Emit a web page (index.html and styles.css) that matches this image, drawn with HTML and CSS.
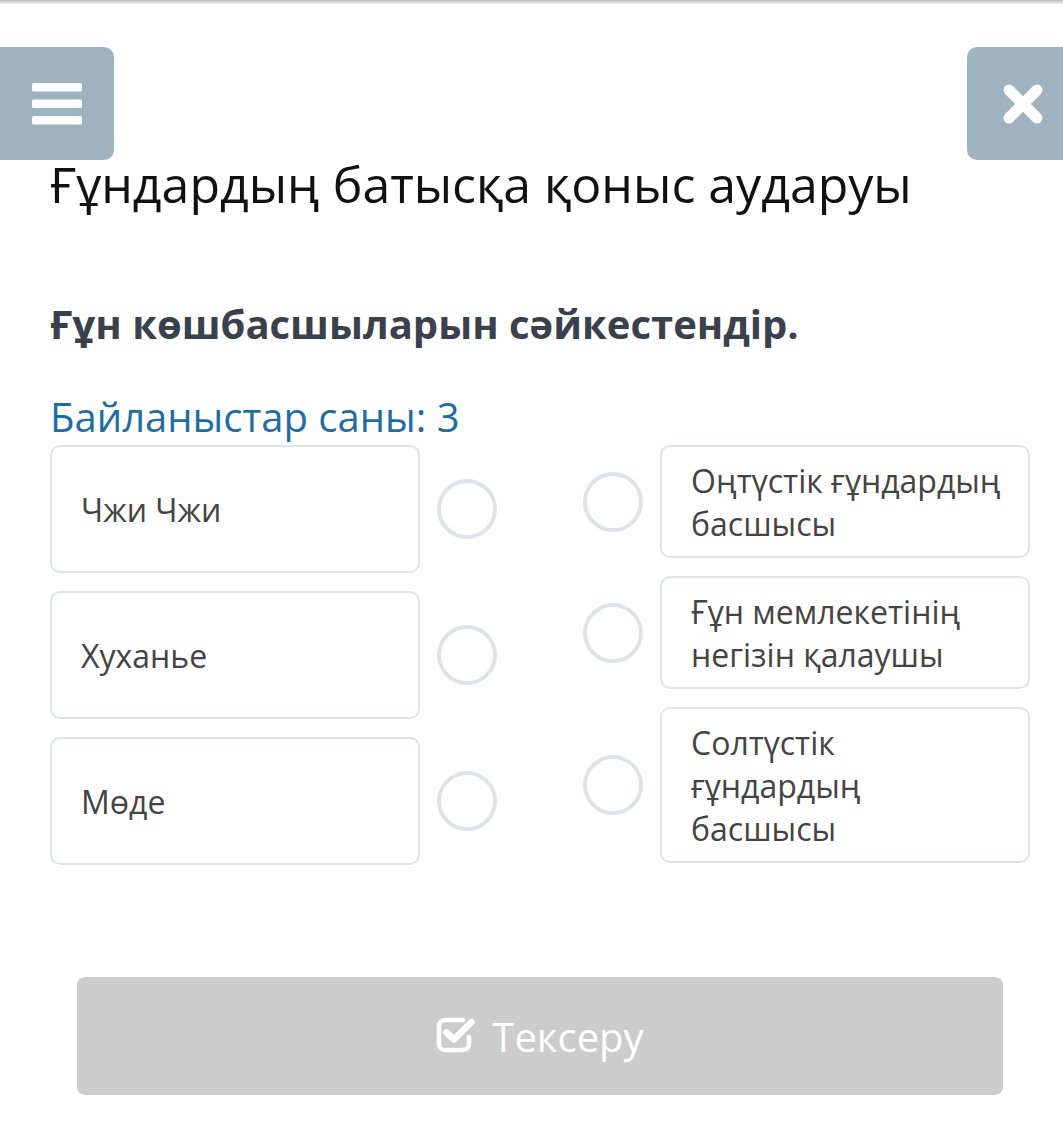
FILE: index.html
```html
<!DOCTYPE html>
<html lang="kk">

<head>
    <meta charset="UTF-8">
    <meta name="viewport" content="width=device-width, initial-scale=1.0">
    <title>Ғұндардың батысқа қоныс аударуы</title>
    <link rel="stylesheet" href="styles.css">
</head>

<body>

    <div class="top-shadow"></div>

    <div class="top-bar">
        <button class="menu-btn" aria-label="Menu">
            <svg width="50" height="42" viewBox="0 0 50 42">
                <rect x="0" y="0" width="50" height="8.5" rx="1.5" fill="#fff" />
                <rect x="0" y="16.5" width="50" height="8.5" rx="1.5" fill="#fff" />
                <rect x="0" y="33" width="50" height="8.5" rx="1.5" fill="#fff" />
            </svg>
        </button>
        <button class="close-btn" aria-label="Close">
            <svg width="42" height="42" viewBox="0 0 42 42">
                <path d="M7 7 L35 35 M35 7 L7 35" stroke="#fff" stroke-width="11" stroke-linecap="round" />
            </svg>
        </button>
    </div>

    <div class="content">
        <h1 class="lesson-title">Ғұндардың батысқа қоныс аударуы</h1>

        <h2 class="task-title">Ғұн көшбасшыларын сәйкестендір.</h2>

        <div class="links-count">Байланыстар саны: 3</div>

        <div class="match-area">
            <div class="match-col">
                <div class="match-row">
                    <div class="match-card tall">Чжи Чжи</div>
                    <span class="dot"></span>
                </div>
                <div class="match-row">
                    <div class="match-card tall">Хуханье</div>
                    <span class="dot"></span>
                </div>
                <div class="match-row">
                    <div class="match-card tall">Мөде</div>
                    <span class="dot"></span>
                </div>
            </div>

            <div class="match-col">
                <div class="match-row">
                    <span class="dot"></span>
                    <div class="match-card">Оңтүстік ғұндардың басшысы</div>
                </div>
                <div class="match-row">
                    <span class="dot"></span>
                    <div class="match-card">Ғұн мемлекетінің негізін қалаушы</div>
                </div>
                <div class="match-row">
                    <span class="dot"></span>
                    <div class="match-card">Солтүстік ғұндардың басшысы</div>
                </div>
            </div>
        </div>

        <button class="check-btn">
            <svg width="40" height="38" viewBox="0 0 40 38">
                <path d="M27 5 H9 a6 6 0 0 0 -6 6 v18 a6 6 0 0 0 6 6 h18 a6 6 0 0 0 6 -6 v-7" fill="none" stroke="#fff" stroke-width="4.5" stroke-linecap="round" />
                <path d="M10.5 17.5 L18 24.5 L35.5 7" fill="none" stroke="#fff" stroke-width="6.5" stroke-linecap="round" stroke-linejoin="round" />
            </svg>
            <span>Тексеру</span>
        </button>
    </div>

</body>

</html>
```

FILE: styles.css
```css
body {
    margin: 0;
    font-family: "Open Sans", "Noto Sans", sans-serif;
    background: #fff;
    color: #111;
}

.top-shadow {
    height: 4px;
    background: linear-gradient(#b9b9b9, #f4f4f4);
}

.top-bar {
    display: flex;
    justify-content: space-between;
    margin-top: 43px;
    height: 113px;
}

.menu-btn,
.close-btn {
    border: none;
    background: #9eb2bf;
    display: flex;
    align-items: center;
    justify-content: center;
    padding: 0;
    cursor: pointer;
}

.menu-btn {
    width: 114px;
    border-radius: 0 10px 10px 0;
}

.close-btn {
    width: 96px;
    border-radius: 10px 0 0 10px;
    justify-content: flex-start;
    padding-left: 35px;
}

.content {
    padding: 0 33px 0 50px;
}

.lesson-title {
    margin: 0;
    font-size: 50px;
    font-weight: 400;
    line-height: 48px;
    color: #111;
}

.task-title {
    margin: 92px 0 0;
    font-size: 40px;
    font-weight: 700;
    line-height: 48px;
    color: #3b414c;
}

.links-count {
    margin-top: 45px;
    font-size: 40px;
    line-height: 48px;
    color: #1f6da1;
}

.match-area {
    display: flex;
    justify-content: space-between;
    margin-top: 4px;
}

.match-col {
    display: flex;
    flex-direction: column;
    gap: 18px;
}

.match-row {
    display: flex;
    align-items: center;
    gap: 17px;
}

.match-card {
    box-sizing: border-box;
    width: 370px;
    border: 2px solid #e0e3e7;
    border-radius: 10px;
    padding: 11.5px 20px 11.5px 29px;
    font-size: 32px;
    line-height: 43px;
    color: #444;
}

.match-card.tall {
    height: 128px;
    display: flex;
    align-items: center;
}

.dot {
    box-sizing: border-box;
    width: 60px;
    height: 60px;
    border: 4px solid #dfe3e8;
    border-radius: 50%;
    flex-shrink: 0;
}

.check-btn {
    display: flex;
    align-items: center;
    justify-content: center;
    gap: 16px;
    width: 926px;
    height: 118px;
    margin: 112px 0 0 27px;
    border: none;
    border-radius: 8px;
    background: #cccccc;
    color: #fff;
    font-family: inherit;
    font-size: 40px;
    cursor: pointer;
}

.check-btn svg {
    margin-top: -4px;
}
```
